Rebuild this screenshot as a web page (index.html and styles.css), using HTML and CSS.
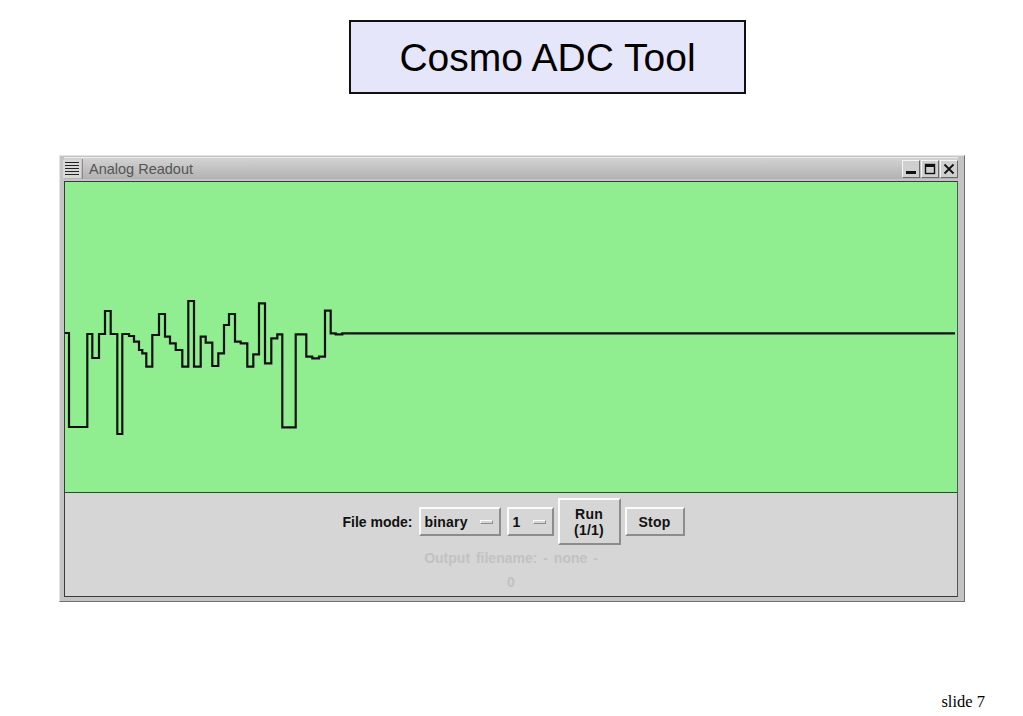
FILE: index.html
```html
<!DOCTYPE html>
<html>
<head>
<meta charset="utf-8">
<link rel="stylesheet" href="styles.css">
</head>
<body>
<div class="slide">
  <div class="title-box">Cosmo ADC Tool</div>
  <div class="window">
    <div class="titlebar">
      <div class="menu-btn">
        <svg width="18" height="18" viewBox="0 0 18 18">
          <rect x="0" y="0" width="18" height="18" fill="#d8d8d8"/>
          <g stroke="#222" stroke-width="1">
            <line x1="2" y1="2.5" x2="16" y2="2.5"/>
            <line x1="2" y1="5.5" x2="16" y2="5.5"/>
            <line x1="2" y1="8.5" x2="16" y2="8.5"/>
            <line x1="2" y1="11.5" x2="16" y2="11.5"/>
            <line x1="2" y1="14.5" x2="16" y2="14.5"/>
          </g>
        </svg>
      </div>
      <div class="title">Analog Readout</div>
      <div class="wm-btns">
        <div class="wm-btn">
          <svg width="12" height="12" viewBox="0 0 12 12"><rect x="1" y="8" width="10" height="3" fill="#111"/></svg>
        </div>
        <div class="wm-btn">
          <svg width="12" height="12" viewBox="0 0 12 12"><rect x="1.5" y="1.5" width="9" height="9" fill="none" stroke="#111" stroke-width="1.4"/><rect x="1" y="1" width="10" height="3" fill="#111"/></svg>
        </div>
        <div class="wm-btn">
          <svg width="12" height="12" viewBox="0 0 12 12"><path d="M1.5 1.5 L10.5 10.5 M10.5 1.5 L1.5 10.5" stroke="#111" stroke-width="1.8"/></svg>
        </div>
      </div>
    </div>
    <div class="client">
      <div class="plot">
        <svg class="wave" width="890" height="310" viewBox="66 182 890 310">
          <polyline fill="none" stroke="#111" stroke-width="2.2" stroke-linejoin="miter"
            points="66,333 70,333 70,427 88.3,427 88.3,334 93.3,334 93.3,358 100,358 100,334 106,334 106,311 111.7,311 111.7,334 118.3,334 118.3,434 123.3,434 123.3,334 130,334 130,336 135,336 135,341.7 140,341.7 140,350 143.3,350 143.3,353.3 147.3,353.3 147.3,366.7 153.3,366.7 153.3,335 160,335 160,314 166,314 166,336.7 171,336.7 171,343.3 176.7,343.3 176.7,350 183.3,350 183.3,366.7 189.3,366.7 189.3,301 195,301 195,366.7 201.7,366.7 201.7,336.7 206.7,336.7 206.7,342.7 213.3,342.7 213.3,366 219.3,366 219.3,353.3 225,353.3 225,325 230,325 230,314 236,314 236,341.7 241.7,341.7 241.7,343.3 248.3,343.3 248.3,366.7 254.3,366.7 254.3,354.3 260,354.3 260,303.3 266,303.3 266,363.3 272.3,363.3 272.3,338.3 278.3,338.3 278.3,334.3 283.3,334.3 283.3,427.3 296.7,427.3 296.7,334.3 307.3,334.3 307.3,356.7 313.3,356.7 313.3,358.3 320,358.3 320,356.7 326,356.7 326,310.7 331.7,310.7 331.7,333.3 336.7,333.3 336.7,334.3 343.3,334.3 343.3,333.3 956,333.3"/>
        </svg>
      </div>
      <div class="controls">
        <div class="row">
          <span class="label">File mode:</span>
          <div class="btn select sel-wide"><span>binary</span><i class="dash"></i></div>
          <div class="btn select sel-narrow"><span>1</span><i class="dash"></i></div>
          <div class="btn run"><span>Run</span><span>(1/1)</span></div>
          <div class="btn stop">Stop</div>
        </div>
        <div class="status">Output filename: - none -</div>
        <div class="status count">0</div>
      </div>
    </div>
  </div>
  <div class="footer">slide 7</div>
</div>
</body>
</html>
```

FILE: styles.css
```css
html, body {
  margin: 0;
  padding: 0;
  background: #ffffff;
}

.slide {
  width: 1023px;
  height: 716px;
  position: relative;
  overflow: hidden;
  font-family: "Liberation Sans", Arial, sans-serif;
}

.title-box {
  box-sizing: border-box;
  margin: 20px 0 0 349px;
  width: 397px;
  height: 74px;
  border: 2px solid #111;
  background: #e6e6fa;
  font-size: 39px;
  line-height: 72px;
  text-align: center;
  color: #000;
}

.window {
  box-sizing: border-box;
  margin: 61px 0 0 59px;
  width: 906px;
  height: 447px;
  background: #c4c4c4;
  border: 1px solid;
  border-color: #e4e4e4 #707070 #707070 #e4e4e4;
  padding: 1px 6px 4px 4px;
  display: flex;
  flex-direction: column;
}

.titlebar {
  height: 22px;
  display: flex;
  align-items: center;
  background: linear-gradient(#d2d2d2, #b2b2b2);
  border-top: 1px solid #ececec;
  box-sizing: border-box;
  margin-bottom: 2px;
}

.menu-btn {
  width: 20px;
  height: 20px;
  display: flex;
  align-items: center;
  justify-content: center;
  border-right: 1px solid #8a8a8a;
  margin-left: -2px;
}

.title {
  flex: 1;
  padding-left: 6px;
  font-size: 14.5px;
  color: #555;
  line-height: 20px;
}

.wm-btns {
  display: flex;
  gap: 1px;
}

.wm-btn {
  box-sizing: border-box;
  width: 18px;
  height: 18px;
  background: #cfcfcf;
  border: 1px solid;
  border-color: #f4f4f4 #6a6a6a #6a6a6a #f4f4f4;
  display: flex;
  align-items: center;
  justify-content: center;
}

.client {
  box-sizing: border-box;
  flex: 1;
  border: 1px solid #3a3a3a;
  border-right-color: #555;
  display: flex;
  flex-direction: column;
  background: #d6d6d6;
}

.plot {
  height: 310px;
  background: #90ee90;
  border-bottom: 1px solid #2c4a2c;
  overflow: hidden;
}

.wave {
  display: block;
}

.controls {
  flex: 1;
  display: flex;
  flex-direction: column;
  align-items: center;
  padding-top: 5px;
  font-size: 14px;
  font-weight: bold;
}

.row {
  display: flex;
  align-items: center;
  gap: 4px;
  margin-left: 5px;
}

.label {
  color: #111;
  margin-right: 2px;
}

.btn {
  box-sizing: border-box;
  background: #d6d6d6;
  border: 2px solid;
  border-color: #fbfbfb #8c8c8c #8c8c8c #fbfbfb;
  color: #111;
  display: flex;
  align-items: center;
  letter-spacing: 0.2px;
}

.select {
  height: 29px;
  padding: 0 6px 0 4px;
  justify-content: space-between;
}

.sel-wide {
  width: 82px;
  margin-right: 2px;
}

.sel-narrow {
  width: 47px;
}

.dash {
  display: block;
  width: 13px;
  height: 4px;
  box-sizing: border-box;
  background: #d6d6d6;
  border: 1px solid;
  border-color: #fbfbfb #8c8c8c #8c8c8c #fbfbfb;
}

.run {
  width: 63px;
  height: 47px;
  flex-direction: column;
  justify-content: center;
  line-height: 16px;
}

.stop {
  width: 60px;
  height: 29px;
  justify-content: center;
}

.status {
  color: #c2c2c2;
  margin-top: 4px;
  line-height: 18px;
  word-spacing: 2px;
}

.count {
  margin-top: 6px;
}

.footer {
  position: absolute;
  right: 38px;
  top: 692px;
  font-family: "Liberation Serif", "Times New Roman", serif;
  font-size: 16.5px;
  color: #000;
}
```
